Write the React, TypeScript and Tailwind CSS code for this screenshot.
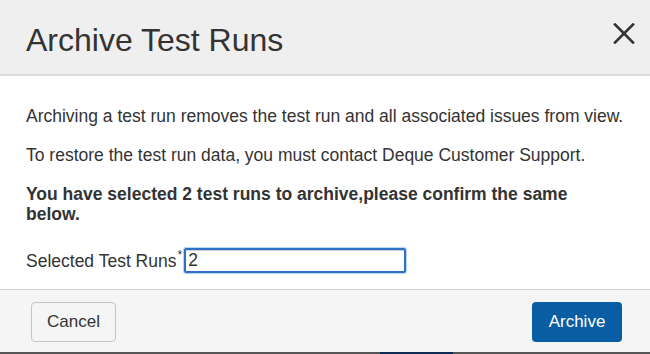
import { useState } from 'react';

export default function App() {
  const [count, setCount] = useState('2');

  return (
    <div className="w-[650px] h-[354px] flex flex-col bg-white text-[#333333] font-['Liberation_Sans',Arial,sans-serif] overflow-hidden">
      <header className="h-[76px] shrink-0 flex items-center justify-between bg-[#efefef] border-b-2 border-[#dcdcdc] pl-[26px] pr-[15px]">
        <h1 className="text-[32px] leading-[36px] mt-[6px] text-[#333333]">Archive Test Runs</h1>
        <button aria-label="Close" className="w-[22px] h-[22px] mt-[-8px] flex items-center justify-center text-[#333333]">
          <svg width="22" height="21" viewBox="0 0 22 21" fill="none" stroke="currentColor" strokeWidth="2.6" strokeLinecap="square">
            <path d="M2 1.5 L20 19.5" />
            <path d="M20 1.5 L2 19.5" />
          </svg>
        </button>
      </header>

      <div className="flex-1 px-[26px] pt-[30px] text-[17.5px] leading-[20px]">
        <p className="mb-[19px]">Archiving a test run removes the test run and all associated issues from view.</p>
        <p className="mb-[19px]">To restore the test run data, you must contact Deque Customer Support.</p>
        <p className="font-bold mb-[24px]">
          You have selected 2 test runs to archive,please confirm the same
          <br />
          below.
        </p>
        <div className="flex items-center">
          <label htmlFor="runs" className="flex items-start whitespace-nowrap">
            Selected Test Runs<span className="text-[12px] leading-[12px] -mt-[2px] ml-[1px]">*</span>
          </label>
          <input
            id="runs"
            value={count}
            onChange={(e) => setCount(e.target.value)}
            className="ml-[2px] w-[222px] h-[25px] px-[2px] border-2 border-[#2f6fc4] rounded-[2px] text-[17.5px] text-[#333333] outline-none shadow-[0_0_0_1px_#b9d6f5,inset_0_1px_1px_rgba(0,0,0,0.2)]"
          />
        </div>
      </div>

      <footer className="h-[63px] shrink-0 flex items-center justify-between border-t border-[#cccccc] bg-[#f5f5f5] pl-[31px] pr-[28px] pt-[2px]">
        <button className="w-[85px] h-[40px] rounded-[4px] border border-[#c4c4c4] bg-[#f5f5f5] text-[17px] text-[#333333]">
          Cancel
        </button>
        <button className="w-[90px] h-[40px] rounded-[4px] bg-[#095da3] text-[17px] text-white">
          Archive
        </button>
      </footer>
      <div className="h-[2px] shrink-0 flex bg-[#555555]">
        <div className="ml-[380px] w-[73px] bg-[#0c2a52]" />
      </div>
    </div>
  );
}
